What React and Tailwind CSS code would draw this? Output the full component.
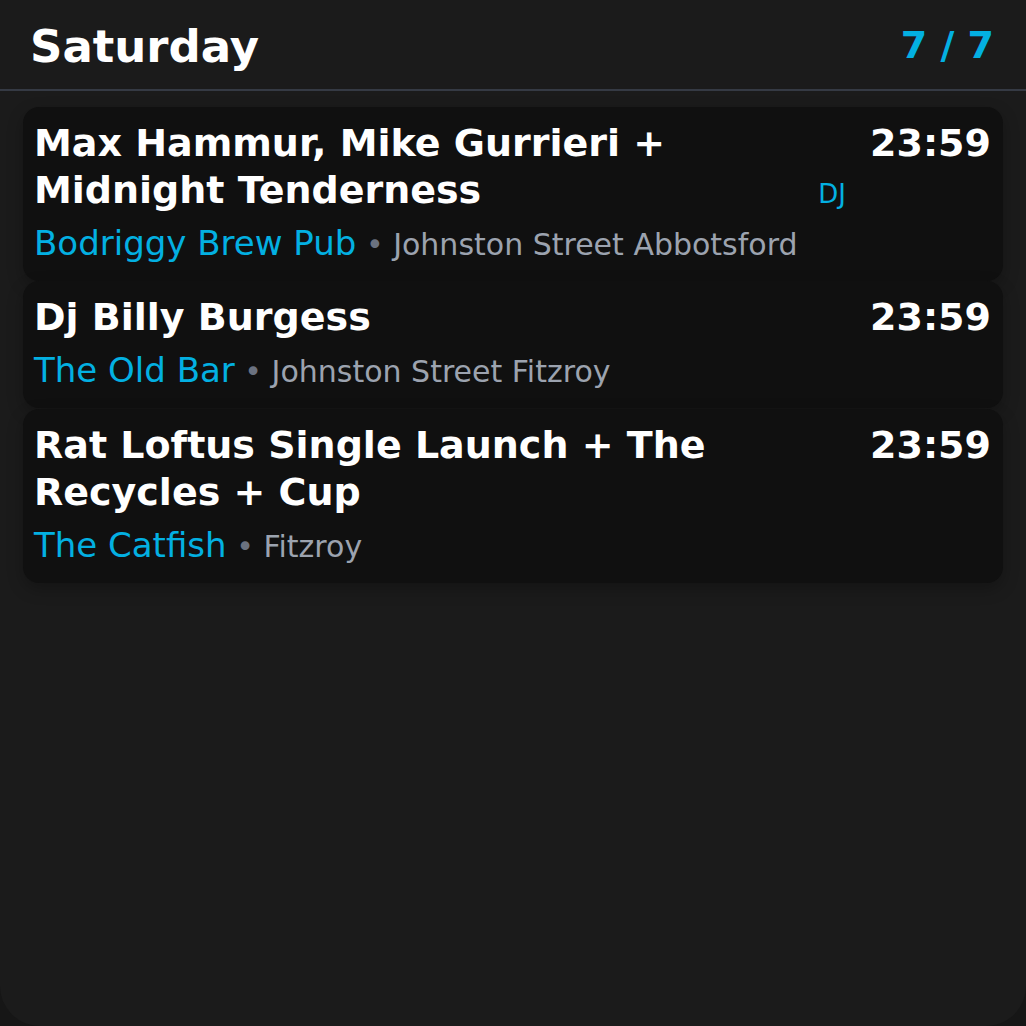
import React from "react";

const events = [
  {
    title: "Max Hammur, Mike Gurrieri + Midnight Tenderness",
    tag: "DJ",
    time: "23:59",
    venue: "Bodriggy Brew Pub",
    place: "Johnston Street Abbotsford",
  },
  {
    title: "Dj Billy Burgess",
    time: "23:59",
    venue: "The Old Bar",
    place: "Johnston Street Fitzroy",
  },
  {
    title: "Rat Loftus Single Launch + The Recycles + Cup",
    time: "23:59",
    venue: "The Catfish",
    place: "Fitzroy",
  },
];

export default function App() {
  return (
    <div
      className="w-[1026px] h-[1026px] bg-[#161616]"
      style={{ fontFamily: '"DejaVu Sans", "Noto Sans", sans-serif' }}
    >
      <div className="w-full h-full bg-[#1b1b1b] rounded-b-[40px] overflow-hidden flex flex-col">
        <header className="h-[91px] shrink-0 flex items-center justify-between pl-[30px] pr-[32px] border-b-2 border-[#353a44]">
          <h1 className="text-[45px] font-bold text-white leading-none pt-1">Saturday</h1>
          <span className="text-[38px] font-bold text-[#03b0e2] leading-none">7 / 7</span>
        </header>
        <div className="flex flex-col px-[23px] pt-4">
          {events.map((e, i) => (
            <div
              key={i}
              className={
                "bg-[#101010] rounded-2xl pl-[11px] pr-3 pt-[13px] pb-[11px] shadow-[0_6px_16px_rgba(0,0,0,0.25)]" +
                (i === 2 ? " mt-px" : "")
              }
            >
              <div className="flex gap-6 items-start">
                <h2 className="flex-1 text-[38px] leading-[47px] font-bold text-white">
                  {e.title}
                </h2>
                {e.tag && (
                  <span className="self-end text-[26px] leading-[40px] text-[#03b0e2]">
                    {e.tag}
                  </span>
                )}
                <span className="text-[38px] leading-[47px] font-bold text-white">
                  {e.time}
                </span>
              </div>
              <p className="mt-1 text-[34px] leading-[51px] text-[#03b0e2]">
                {e.venue}
                <span className="text-[30px] text-[#9ca3af]">
                  {" "}
                  <span className="text-[#6b7280]">•</span> {e.place}
                </span>
              </p>
            </div>
          ))}
        </div>
      </div>
    </div>
  );
}
